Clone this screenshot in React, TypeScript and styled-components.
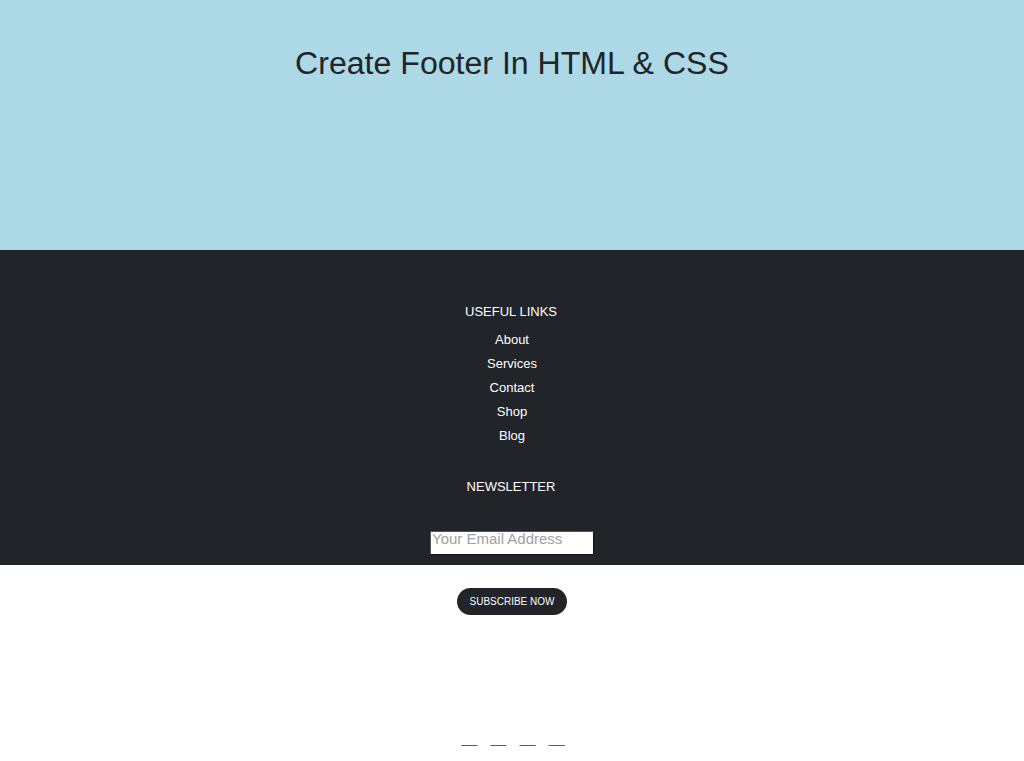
import React from "react";
import styled, { createGlobalStyle } from "styled-components";

const Global = createGlobalStyle`
  html, body { margin: 0; padding: 0; background: #ffffff; }
  body { font-family: "Liberation Sans", Arial, sans-serif; }
  * { box-sizing: border-box; }
`;

const Hero = styled.header`
  height: 250px;
  background: #add8e6;
  display: flex;
  justify-content: center;
  padding-top: 44px;
`;

const Title = styled.h1`
  margin: 0;
  font-size: 32.1px;
  font-weight: 400;
  color: #212529;
  line-height: 38px;
  height: 38px;
`;

const Footer = styled.footer`
  background: #212429;
  display: flex;
  flex-direction: column;
  align-items: center;
  padding: 54px 0 10px;
`;

const Column = styled.div`
  display: flex;
  flex-direction: column;
  align-items: center;
`;

const Heading = styled.h4`
  margin: 0 0 12px 0;
  font-size: 13px;
  font-weight: 400;
  line-height: 16px;
  color: #ffffff;
  padding-right: 2px;
`;

const LinkList = styled.ul`
  list-style: none;
  margin: 0;
  padding: 0;
  display: flex;
  flex-direction: column;
  align-items: center;
  gap: 8px;
`;

const LinkItem = styled.li`
  font-size: 13px;
  line-height: 16px;
  color: #ffffff;
`;

const NewsletterBlock = styled(Column)`
  margin-top: 35px;
`;

const EmailInput = styled.input`
  margin-top: 24px;
  width: 164px;
  height: 24px;
  border: 1px solid #111;
  border-top-color: #555;
  border-left-color: #555;
  background: #ffffff;
  font-family: "Liberation Sans", Arial, sans-serif;
  font-size: 15px;
  padding: 0 0 9px 1px;
  outline: none;
  &::placeholder { color: #a0a0a0; }
`;

const Below = styled.section`
  display: flex;
  flex-direction: column;
  align-items: center;
  padding-top: 23px;
`;

const SubscribeButton = styled.button`
  height: 27px;
  padding: 0 12px;
  border: none;
  border-radius: 14px;
  background: #212429;
  color: #ffffff;
  font-family: "Liberation Sans", Arial, sans-serif;
  font-size: 10px;
  cursor: pointer;
`;

const Socials = styled.div`
  margin-top: 116px;
  display: flex;
  justify-content: center;
  gap: 13px;
  padding-left: 2px;
`;

const SocialLink = styled.a`
  color: #0a66ff;
  text-decoration: underline;
  font-size: 14.5px;
  line-height: 17px;
  white-space: pre;
  & span { color: #f4f4f4; }
`;

export default function App() {
  const links = ["About", "Services", "Contact", "Shop", "Blog"];
  return (
    <>
      <Global />
      <Hero>
        <Title>Create Footer In HTML &amp; CSS</Title>
      </Hero>
      <Footer>
        <Column>
          <Heading>USEFUL LINKS</Heading>
          <LinkList>
            {links.map((l) => (
              <LinkItem key={l}>{l}</LinkItem>
            ))}
          </LinkList>
        </Column>
        <NewsletterBlock>
          <Heading>NEWSLETTER</Heading>
          <EmailInput type="email" placeholder="Your Email Address" />
        </NewsletterBlock>
      </Footer>
      <Below>
        <SubscribeButton>SUBSCRIBE NOW</SubscribeButton>
        <Socials>
          {[0, 1, 2, 3].map((i) => (
            <SocialLink key={i} href="#">
              <span>{"\u00a0\u00a0\u00a0\u00a0"}</span>
            </SocialLink>
          ))}
        </Socials>
      </Below>
    </>
  );
}
